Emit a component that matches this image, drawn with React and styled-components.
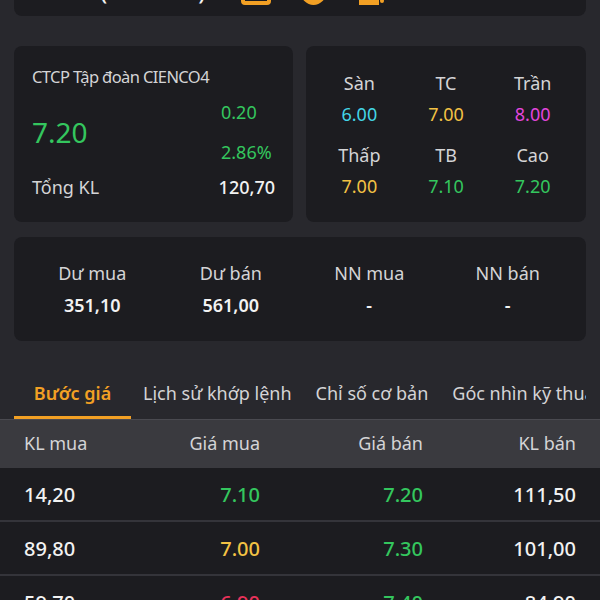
import React from "react";
import styled, { createGlobalStyle } from "styled-components";

const C = {
  bg: "#28282d",
  card: "#1c1c20",
  head: "#3a3a3f",
  line: "#34343a",
  label: "#d4d4d6",
  white: "#f2f2f2",
  green: "#34c65e",
  cyan: "#43d6e6",
  yellow: "#f3c244",
  magenta: "#e246dc",
  red: "#e8325a",
  orange: "#f2a024",
};

const Global = createGlobalStyle`
  html, body { margin: 0; padding: 0; background: ${C.bg}; }
  body { font-family: "Noto Sans", "Open Sans", sans-serif; color: ${C.white}; overflow: hidden; }
  * { box-sizing: border-box; }
`;

const Page = styled.div`
  width: 600px;
  height: 600px;
  overflow: hidden;
  display: flex;
  flex-direction: column;
  & > * { flex: none; }
`;

const Section = styled.div`
  padding: 0 14px;
  display: flex;
  flex-direction: column;
`;

const Card = styled.div`
  background: ${C.card};
  border-radius: 8px;
`;

const HeaderCard = styled(Card)`
  margin-top: -44px;
  height: 60px;
  display: flex;
  align-items: flex-end;
  gap: 35px;
  padding: 0 0 7px 31px;
  overflow: hidden;
`;

const Ticker = styled.div`
  font-size: 25px;
  line-height: 34px;
  font-weight: 400;
  color: ${C.white};
  margin-bottom: 3px;
`;

const Icons = styled.div`
  display: flex;
  align-items: flex-end;
  gap: 30px;
  padding-bottom: 4px;
`;

const TopRow = styled.div`
  margin-top: 30px;
  display: grid;
  grid-template-columns: 279px 1fr;
  gap: 13px;
  height: 176px;
`;

const QuoteCard = styled(Card)`
  padding: 20px 18px 0 18px;
  display: flex;
  flex-direction: column;
`;

const Name = styled.div`
  font-size: 16.5px;
  line-height: 22px;
  letter-spacing: -0.6px;
  color: ${C.label};
  white-space: nowrap;
`;

const PriceBlock = styled.div`
  margin-top: 12px;
  display: grid;
  grid-template-columns: 189px 1fr;
  align-items: center;
`;

const BigPrice = styled.div`
  font-size: 28px;
  line-height: 36px;
  color: ${C.green};
`;

const Changes = styled.div`
  display: flex;
  flex-direction: column;
  gap: 16px;
`;

const Num = styled.div`
  font-size: ${(p) => p.$size || 18}px;
  line-height: 24px;
  font-weight: ${(p) => p.$weight || 400};
  color: ${(p) => p.$color || C.white};
`;

const TotalRow = styled.div`
  margin-top: 11px;
  display: flex;
  justify-content: space-between;
  align-items: center;
`;

const Label = styled.div`
  font-size: 18px;
  line-height: 24px;
  color: ${C.label};
`;

const RangeCard = styled(Card)`
  padding: 0 10px;
  display: grid;
  grid-template-columns: repeat(3, 1fr);
  align-content: center;
  row-gap: 17px;
`;

const Stat = styled.div`
  display: flex;
  flex-direction: column;
  align-items: center;
  gap: ${(p) => p.$gap || 7}px;
`;

const FlowCard = styled(Card)`
  margin-top: 15px;
  height: 104px;
  padding: 0 9px;
  display: grid;
  grid-template-columns: repeat(4, 1fr);
  align-items: center;
`;

const Tabs = styled.div`
  margin: 28px 14px 0 14px;
  height: 50px;
  display: flex;
  overflow: hidden;
  white-space: nowrap;
`;

const Tab = styled.div`
  flex: none;
  padding: 0 12px;
  min-width: ${(p) => (p.$active ? "117px" : "0")};
  display: flex;
  align-items: center;
  justify-content: center;
  font-size: 18px;
  font-weight: ${(p) => (p.$active ? 600 : 400)};
  color: ${(p) => (p.$active ? C.orange : C.label)};
  border-bottom: 3px solid ${(p) => (p.$active ? C.orange : "transparent")};
`;

const Table = styled.div`
  border-top: 1px solid #4a4a50;
  display: flex;
  flex-direction: column;
`;

const Row = styled.div`
  flex: none;
  display: grid;
  grid-template-columns: 118px 118px 163px 153px;
  padding: 0 24px;
  align-items: center;
  height: ${(p) => (p.$head ? 48 : 54)}px;
  background: ${(p) => (p.$head ? C.head : C.card)};
  border-bottom: 2px solid ${(p) => (p.$head ? C.head : C.line)};
`;

const Cell = styled.div`
  text-align: ${(p) => (p.$left ? "left" : "right")};
  font-size: ${(p) => (p.$head ? 18 : 20)}px;
  font-weight: ${(p) => (p.$head ? 400 : 500)};
  color: ${(p) => p.$color || (p.$head ? C.label : C.white)};
`;

const rows = [
  ["14,20", "7.10", C.green, "7.20", C.green, "111,50"],
  ["89,80", "7.00", C.yellow, "7.30", C.green, "101,00"],
  ["59,70", "6.90", C.red, "7.40", C.green, "84,90"],
];

const stats = [
  ["Sàn", "6.00", C.cyan],
  ["TC", "7.00", C.yellow],
  ["Trần", "8.00", C.magenta],
  ["Thấp", "7.00", C.yellow],
  ["TB", "7.10", C.green],
  ["Cao", "7.20", C.green],
];

const flows = [
  ["Dư mua", "351,10"],
  ["Dư bán", "561,00"],
  ["NN mua", "-"],
  ["NN bán", "-"],
];

const tabs = ["Bước giá", "Lịch sử khớp lệnh", "Chỉ số cơ bản", "Góc nhìn kỹ thuật"];

export default function App() {
  return (
    <Page>
      <Global />
      <Section>
        <HeaderCard>
          <Ticker>C4G (UPCOM)</Ticker>
          <Icons>
            <svg width="30" height="26" viewBox="0 0 30 26">
              <rect x="2" y="2" width="26" height="22" rx="2" fill="none" stroke={C.orange} strokeWidth="4" />
            </svg>
            <svg width="25" height="25" viewBox="0 0 25 25">
              <circle cx="12.5" cy="12.5" r="12.5" fill={C.orange} />
            </svg>
            <svg width="28" height="26" viewBox="0 0 28 26">
              <rect x="9" y="0" width="8" height="26" fill={C.orange} />
              <rect x="3" y="21" width="20" height="5" fill={C.orange} />
              <circle cx="26" cy="22" r="2" fill={C.orange} />
            </svg>
          </Icons>
        </HeaderCard>

        <TopRow>
          <QuoteCard>
            <Name>CTCP Tập đoàn CIENCO4</Name>
            <PriceBlock>
              <BigPrice>7.20</BigPrice>
              <Changes>
                <Num $color={C.green}>0.20</Num>
                <Num $color={C.green}>2.86%</Num>
              </Changes>
            </PriceBlock>
            <TotalRow>
              <Label>Tổng KL</Label>
              <Num $weight={500}>120,70</Num>
            </TotalRow>
          </QuoteCard>
          <RangeCard>
            {stats.map(([l, v, c]) => (
              <Stat key={l}>
                <Label>{l}</Label>
                <Num $color={c}>{v}</Num>
              </Stat>
            ))}
          </RangeCard>
        </TopRow>

        <FlowCard>
          {flows.map(([l, v]) => (
            <Stat key={l} $gap={8}>
              <Label>{l}</Label>
              <Num $weight={600}>{v}</Num>
            </Stat>
          ))}
        </FlowCard>
      </Section>

      <Tabs>
        {tabs.map((t, i) => (
          <Tab key={t} $active={i === 0}>
            {t}
          </Tab>
        ))}
      </Tabs>

      <Table>
        <Row $head>
          <Cell $head $left>KL mua</Cell>
          <Cell $head>Giá mua</Cell>
          <Cell $head>Giá bán</Cell>
          <Cell $head>KL bán</Cell>
        </Row>
        {rows.map((r) => (
          <Row key={r[0]}>
            <Cell $left>{r[0]}</Cell>
            <Cell $color={r[2]}>{r[1]}</Cell>
            <Cell $color={r[4]}>{r[3]}</Cell>
            <Cell>{r[5]}</Cell>
          </Row>
        ))}
      </Table>
    </Page>
  );
}
